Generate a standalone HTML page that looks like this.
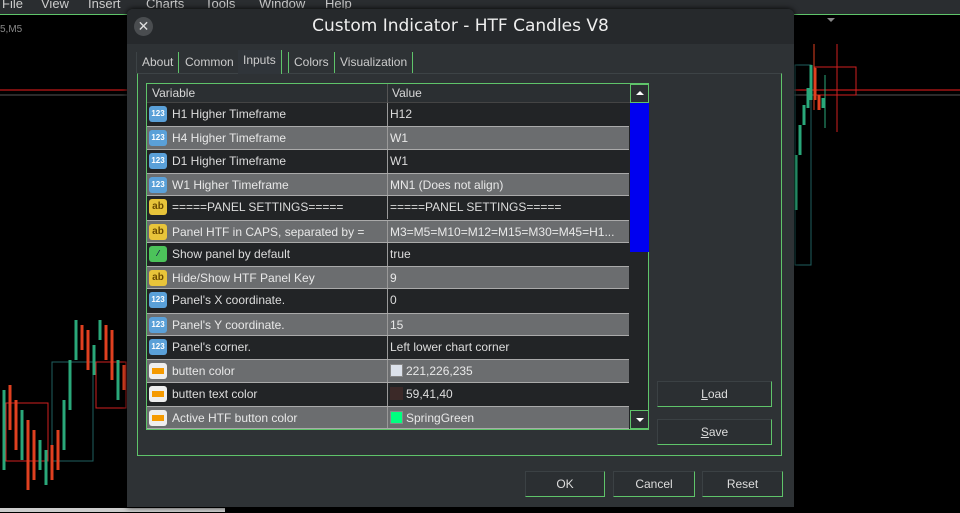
<!DOCTYPE html>
<html><head><meta charset="utf-8"><style>
*{margin:0;padding:0;box-sizing:border-box}
body{width:960px;height:513px;background:#000;overflow:hidden;position:relative;font-family:"Liberation Sans","DejaVu Sans",sans-serif;font-size:12px;color:#d8d8d8}
.abs{position:absolute}
.menu{left:0;top:0;width:960px;height:15px;background:#2a2d30;border-bottom:1px solid #5fc46a;font-size:13px;color:#ccc}
.menu span{position:absolute;top:-4px}
.dlg{left:127px;top:9px;width:667px;height:498px;background:#2e3235;border-radius:6px 6px 0 0;box-shadow:0 0 6px #000}
.title{left:0;top:0;width:667px;height:35px;background:#26292c;border-radius:6px 6px 0 0;text-align:center;font-size:17px;line-height:35px;color:#eee;font-family:"DejaVu Sans",sans-serif}
.close{left:7px;top:8px;width:19px;height:19px;border-radius:50%;background:#4a4d50;color:#ddd;font-size:14px;line-height:19px;text-align:center}
.tab{top:43px;height:21px;line-height:20px;padding:0 5px;background:#2e3235;border-right:1px solid #5fc46a;font-size:12px;color:#ccc}
.panel{left:10px;top:64px;width:645px;height:383px;border:1px solid #5fc46a;border-top:1px solid #3d4346}
.tbl{left:19px;top:74px;width:503px;height:347px;background:#222426;border:1px solid #5fc46a}
.hdr{left:0;top:0;width:483px;height:19px;background:#2b2f32;border-bottom:1px solid #444}
.row{position:absolute;left:0;width:482px;height:23.3px;line-height:22px;font-size:12px}
.d{background:#222426;color:#ddd}
.g{background:#6b6d6f;color:#e8e8e8;border-top:1px solid #aaa;border-bottom:1px solid #aaa}
.row .c1{position:absolute;left:25px}
.row .c2{position:absolute;left:243px}
.row .sep{position:absolute;left:240px;top:0;width:1px;height:100%;background:#999}
.ic{position:absolute;left:2px;top:3px;width:18px;height:16px;border-radius:3px;font-size:8px;line-height:16px;text-align:center;font-weight:bold}
.n{background:#5aa0d8;color:#fff}
.ab{background:#e8c43a;color:#6a4a00;font-size:10px}
.bl{background:#4cc35a;color:#114}
.cl{background:#eee;}
.cl:after{content:"";position:absolute;left:3px;top:5px;width:12px;height:6px;background:#f59a00}
.btn{height:26px;border:1px solid #5fc46a;border-top-color:#3b4144;border-left-color:#3b4144;background:#2b2f32;text-align:center;line-height:24px;color:#ddd;font-size:12px}
.sw{display:inline-block;width:13px;height:13px;vertical-align:-2px;margin-right:3px;border:1px solid #888}
.sb{width:19px;height:19px;border:1px solid #5fc46a;background:#2b2f32}
.up{position:absolute;left:5px;top:6px;border-left:4px solid transparent;border-right:4px solid transparent;border-bottom:4px solid #fff}
.dn{position:absolute;left:5px;top:7px;border-left:4px solid transparent;border-right:4px solid transparent;border-top:4px solid #fff}
</style></head><body>
<svg class="abs" style="left:0;top:0" width="960" height="513">
<line x1="0" y1="90" x2="960" y2="90" stroke="#c01818" stroke-width="1.2"/>
<line x1="0" y1="95" x2="960" y2="95" stroke="#555"/>
<rect x="6" y="403" width="42" height="58" fill="none" stroke="#d02020"/>
<rect x="52" y="362" width="41" height="99" fill="none" stroke="#1f6060"/>
<rect x="96" y="362" width="30" height="46" fill="none" stroke="#d02020"/>
<rect x="795" y="65" width="16" height="200" fill="none" stroke="#1f6060"/>
<rect x="815" y="67" width="41" height="28" fill="none" stroke="#d02020"/>
<g stroke-width="3">
<line x1="4" y1="390" x2="4" y2="470" stroke="#2aa87a"/><line x1="10" y1="385" x2="10" y2="430" stroke="#e04020"/>
<line x1="16" y1="400" x2="16" y2="450" stroke="#e04020"/><line x1="22" y1="410" x2="22" y2="460" stroke="#2aa87a"/>
<line x1="28" y1="420" x2="28" y2="490" stroke="#e04020"/><line x1="34" y1="430" x2="34" y2="480" stroke="#e04020"/>
<line x1="40" y1="440" x2="40" y2="470" stroke="#2aa87a"/><line x1="46" y1="450" x2="46" y2="485" stroke="#2aa87a"/>
<line x1="52" y1="445" x2="52" y2="480" stroke="#e04020"/><line x1="58" y1="430" x2="58" y2="470" stroke="#e04020"/>
<line x1="64" y1="400" x2="64" y2="450" stroke="#2aa87a"/><line x1="70" y1="360" x2="70" y2="410" stroke="#2aa87a"/>
<line x1="76" y1="320" x2="76" y2="360" stroke="#2aa87a"/><line x1="82" y1="325" x2="82" y2="350" stroke="#e04020"/>
<line x1="88" y1="330" x2="88" y2="370" stroke="#e04020"/><line x1="94" y1="345" x2="94" y2="375" stroke="#2aa87a"/>
<line x1="100" y1="320" x2="100" y2="340" stroke="#2aa87a"/><line x1="106" y1="325" x2="106" y2="360" stroke="#e04020"/>
<line x1="112" y1="330" x2="112" y2="380" stroke="#e04020"/><line x1="118" y1="360" x2="118" y2="400" stroke="#2aa87a"/>
<line x1="124" y1="365" x2="124" y2="390" stroke="#e04020"/>
<line x1="796" y1="155" x2="796" y2="210" stroke="#2aa87a"/><line x1="800" y1="125" x2="800" y2="155" stroke="#2aa87a"/>
<line x1="804" y1="105" x2="804" y2="125" stroke="#2aa87a"/><line x1="808" y1="88" x2="808" y2="108" stroke="#2aa87a"/>
<line x1="811" y1="65" x2="811" y2="100" stroke="#2aa87a"/><line x1="815" y1="68" x2="815" y2="100" stroke="#e04020"/>
<line x1="819" y1="95" x2="819" y2="110" stroke="#e04020"/><line x1="823" y1="98" x2="823" y2="108" stroke="#2aa87a"/>
</g>
<g stroke-width="1"><line x1="814" y1="44" x2="814" y2="110" stroke="#e04020"/><line x1="837" y1="44" x2="837" y2="132" stroke="#d02020"/><line x1="825" y1="75" x2="825" y2="128" stroke="#2aa87a"/></g>
<text x="0" y="32" fill="#888" font-size="10" font-family="Liberation Sans">5,M5</text>
<polygon points="827,18 835,18 831,22" fill="#888"/>
<line x1="0" y1="510" x2="225" y2="510" stroke="#ccc" stroke-width="4"/>
</svg>
<div class="abs menu"><span style="left:2px">File</span><span style="left:41px">View</span><span style="left:88px">Insert</span><span style="left:146px">Charts</span><span style="left:205px">Tools</span><span style="left:259px">Window</span><span style="left:325px">Help</span></div>
<div class="abs dlg">
<div class="abs title">Custom Indicator - HTF Candles V8</div>
<div class="abs close">✕</div>
<div class="abs panel"></div>
<div class="abs tab" style="left:9px;border-left:1px solid #3d4346">About</div>
<div class="abs tab" style="left:53px">Common</div>
<div class="abs tab" style="left:111px;top:41px;height:24px;background:#30353a">Inputs</div>
<div class="abs tab" style="left:161px;border-left:1px solid #5fc46a">Colors</div>
<div class="abs tab" style="left:208px">Visualization</div>
<div class="abs tbl">
<div class="abs hdr"><span class="abs" style="left:5px;top:2px">Variable</span><span class="abs" style="left:240px;top:0;width:1px;height:19px;background:#555"></span><span class="abs" style="left:245px;top:2px">Value</span></div>
<div class="abs sb" style="left:483px;top:0"><span class="up"></span></div>
<div class="abs" style="left:483px;top:19px;width:19px;height:149px;background:#0000f0"></div>
<div class="abs sb" style="left:483px;top:326px"><span class="dn"></span></div>
<div class="row d" style="top:19px"><span class="ic n">123</span><span class="c1">H1 Higher Timeframe</span><span class="sep"></span><span class="c2">H12</span></div>
<div class="row g" style="top:42.3px"><span class="ic n">123</span><span class="c1">H4 Higher Timeframe</span><span class="sep"></span><span class="c2">W1</span></div>
<div class="row d" style="top:65.6px"><span class="ic n">123</span><span class="c1">D1 Higher Timeframe</span><span class="sep"></span><span class="c2">W1</span></div>
<div class="row g" style="top:88.9px"><span class="ic n">123</span><span class="c1">W1 Higher Timeframe</span><span class="sep"></span><span class="c2">MN1 (Does not align)</span></div>
<div class="row d" style="top:112.2px"><span class="ic ab">ab</span><span class="c1">=====PANEL SETTINGS=====</span><span class="sep"></span><span class="c2">=====PANEL SETTINGS=====</span></div>
<div class="row g" style="top:135.5px"><span class="ic ab">ab</span><span class="c1">Panel HTF in CAPS, separated by =</span><span class="sep"></span><span class="c2">M3=M5=M10=M12=M15=M30=M45=H1...</span></div>
<div class="row d" style="top:158.8px"><span class="ic bl">⁄</span><span class="c1">Show panel by default</span><span class="sep"></span><span class="c2">true</span></div>
<div class="row g" style="top:182.1px"><span class="ic ab">ab</span><span class="c1">Hide/Show HTF Panel Key</span><span class="sep"></span><span class="c2">9</span></div>
<div class="row d" style="top:205.4px"><span class="ic n">123</span><span class="c1">Panel's X coordinate.</span><span class="sep"></span><span class="c2">0</span></div>
<div class="row g" style="top:228.7px"><span class="ic n">123</span><span class="c1">Panel's Y coordinate.</span><span class="sep"></span><span class="c2">15</span></div>
<div class="row d" style="top:252px"><span class="ic n">123</span><span class="c1">Panel's corner.</span><span class="sep"></span><span class="c2">Left lower chart corner</span></div>
<div class="row g" style="top:275.3px"><span class="ic cl"></span><span class="c1">butten color</span><span class="sep"></span><span class="c2"><span class="sw" style="background:#dde2eb"></span>221,226,235</span></div>
<div class="row d" style="top:298.6px"><span class="ic cl"></span><span class="c1">butten text color</span><span class="sep"></span><span class="c2"><span class="sw" style="background:#3b2928;border-color:#3b2928"></span>59,41,40</span></div>
<div class="row g" style="top:321.9px"><span class="ic cl"></span><span class="c1">Active HTF button color</span><span class="sep"></span><span class="c2"><span class="sw" style="background:#00ff7f"></span>SpringGreen</span></div>
</div>
<div class="abs btn" style="left:530px;top:372px;width:115px"><u>L</u>oad</div>
<div class="abs btn" style="left:530px;top:410px;width:115px"><u>S</u>ave</div>
<div class="abs btn" style="left:398px;top:462px;width:80px">OK</div>
<div class="abs btn" style="left:486px;top:462px;width:82px">Cancel</div>
<div class="abs btn" style="left:575px;top:462px;width:81px">Reset</div>
</div>
</body></html>
